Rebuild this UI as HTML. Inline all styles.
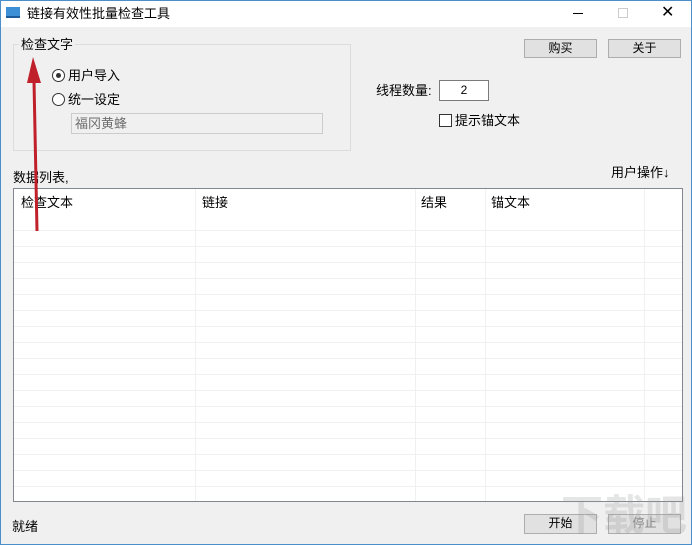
<!DOCTYPE html>
<html><head><meta charset="utf-8"><style>
*{margin:0;padding:0;box-sizing:border-box}
html,body{width:692px;height:545px;overflow:hidden}
body{background:#f0f0f0;font-family:"Liberation Sans","Microsoft YaHei","Noto Sans CJK SC",sans-serif;font-size:12px;color:#000;position:relative;border:1px solid #4a8fc9}
.a{position:absolute;white-space:nowrap}
.t{font-size:13px;line-height:15px}
.btn{position:absolute;background:#e1e1e1;border:1px solid #adadad;text-align:center;line-height:17px}
</style></head><body>
<div class="a" style="left:0;top:0;width:690px;height:26px;background:#fff"></div>
<div class="a" style="left:5px;top:6px;width:14px;height:11px;background:#3d8fd6;border-bottom:2px solid #1c5a9a"></div>
<div class="a t" style="left:26px;top:5px">链接有效性批量检查工具</div>
<div class="a" style="left:572px;top:12px;width:10px;height:1px;background:#000"></div>
<div class="a" style="left:617px;top:7px;width:10px;height:10px;border:1px solid #ccc"></div>
<div class="a" style="left:660px;top:3px;font-size:16px;line-height:18px">✕</div>

<div class="a" style="left:12px;top:43px;width:338px;height:107px;border:1px solid #dcdcdc"></div>
<div class="a t" style="left:18px;top:36px;background:#f0f0f0;padding:0 2px">检查文字</div>
<div class="a" style="left:51px;top:68px;width:13px;height:13px;border:1px solid #333;border-radius:50%;background:#fff"><div class="a" style="left:3px;top:3px;width:5px;height:5px;border-radius:50%;background:#333"></div></div>
<div class="a t" style="left:67px;top:67px">用户导入</div>
<div class="a" style="left:51px;top:92px;width:13px;height:13px;border:1px solid #333;border-radius:50%;background:#fff"></div>
<div class="a t" style="left:67px;top:91px">统一设定</div>
<div class="a t" style="left:70px;top:112px;width:252px;height:21px;border:1px solid #ccc;background:#f0f0f0;color:#6d6d6d;padding:2px 3px">福冈黄蜂</div>

<div class="btn" style="left:523px;top:38px;width:73px;height:19px">购买</div>
<div class="btn" style="left:607px;top:38px;width:73px;height:19px">关于</div>
<div class="a t" style="left:375px;top:82px">线程数量:</div>
<div class="a" style="left:438px;top:79px;width:50px;height:21px;border:1px solid #7a7a7a;background:#fff;text-align:center;line-height:19px">2</div>
<div class="a" style="left:438px;top:113px;width:13px;height:13px;border:1px solid #333;background:#fff"></div>
<div class="a t" style="left:454px;top:112px">提示锚文本</div>

<div class="a t" style="left:12px;top:169px">数据列表,</div>
<div class="a t" style="left:610px;top:164px">用户操作↓</div>

<div class="a" style="left:12px;top:187px;width:670px;height:314px;border:1px solid #828790;background:#fff;overflow:hidden">
<div class="a" style="left:0;top:41px;width:100%;height:300px;background:repeating-linear-gradient(to bottom,#f0f0f0 0,#f0f0f0 1px,transparent 1px,transparent 16px)"></div>
<div class="a" style="left:181px;top:0;width:1px;height:100%;background:#f0f0f0"></div>
<div class="a" style="left:401px;top:0;width:1px;height:100%;background:#f0f0f0"></div>
<div class="a" style="left:471px;top:0;width:1px;height:100%;background:#f0f0f0"></div>
<div class="a" style="left:630px;top:0;width:1px;height:100%;background:#f0f0f0"></div>
<div class="a t" style="left:7px;top:6px">检查文本</div>
<div class="a t" style="left:188px;top:6px">链接</div>
<div class="a t" style="left:407px;top:6px">结果</div>
<div class="a t" style="left:477px;top:6px">锚文本</div>
</div>

<div class="a t" style="left:11px;top:518px">就绪</div>
<div class="btn" style="left:523px;top:513px;width:73px;height:20px">开始</div>
<div class="btn" style="left:607px;top:513px;width:73px;height:20px;color:#888">停止</div>

<svg class="a" style="left:0;top:0" width="692" height="545"><path d="M36 230 L33 80" stroke="#c0202a" stroke-width="3" fill="none"/><path d="M26 82 L32 56 L40 82 Z" fill="#c0202a"/></svg>
<div class="a" style="left:560px;top:492px;font-size:42px;line-height:46px;color:rgba(150,150,150,0.25);font-weight:bold">下载吧</div>
</body></html>
